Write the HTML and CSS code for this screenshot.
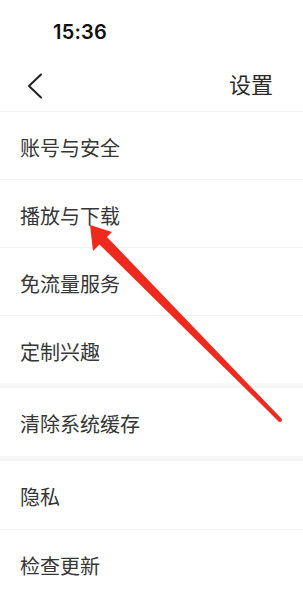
FILE: index.html
```html
<!DOCTYPE html>
<html lang="zh">
<head>
<meta charset="utf-8">
<link rel="stylesheet" href="styles.css">
</head>
<body>
<div class="page">
  <div class="status"><span class="time">15:36</span></div>
  <div class="nav">
    <svg class="back" width="20" height="30" viewBox="0 0 20 30"><path d="M15 1.5 L3 13 L15 24.5" fill="none" stroke="#222" stroke-width="2" stroke-linecap="round" stroke-linejoin="round"/></svg>
    <span class="title">设置</span>
  </div>
  <div class="group">
    <div class="row">账号与安全</div>
    <div class="row">播放与下载</div>
    <div class="row">免流量服务</div>
    <div class="row">定制兴趣</div>
  </div>
  <div class="band"></div>
  <div class="group">
    <div class="row tall">清除系统缓存</div>
  </div>
  <div class="band"></div>
  <div class="group">
    <div class="row tall">隐私</div>
    <div class="row">检查更新</div>
  </div>
  <svg class="arrow" width="303" height="600" viewBox="0 0 303 600">
    <polygon fill="#ee2a1e" points="90,225 93,251 112,232"/>
    <polygon fill="#ee2a1e" points="99,244 106,236 281.4,418.6 278.6,421.4"/>
    <circle cx="280" cy="420" r="2" fill="#ee2a1e"/>
  </svg>
</div>
</body>
</html>
```
FILE: styles.css
```css
html, body {
  margin: 0;
  padding: 0;
  background: #fff;
}
.page {
  position: relative;
  width: 303px;
  height: 600px;
  overflow: hidden;
  font-family: "Noto Sans CJK SC", "Noto Sans", sans-serif;
  color: #363636;
}
.status {
  height: 56px;
  display: flex;
  align-items: center;
  padding-left: 53px;
  box-sizing: border-box;
  padding-top: 8px;
}
.time {
  font-family: Inter, Roboto, sans-serif;
  font-weight: 600;
  font-size: 20px;
  color: #111;
  letter-spacing: 0.2px;
}
.nav {
  height: 55px;
  border-bottom: 1px solid #f2f2f2;
  display: flex;
  align-items: center;
  justify-content: space-between;
  padding: 0 30px 0 26px;
}
.back {
  display: block;
  margin-top: 8px;
}
.title {
  font-size: 22px;
  color: #2a2a2a;
  line-height: 1;
  margin-top: -2px;
}
.group {
  display: flex;
  flex-direction: column;
}
.row {
  height: 67px;
  display: flex;
  align-items: center;
  padding-left: 20px;
  padding-top: 3px;
  box-sizing: border-box;
  font-size: 20px;
  color: #363636;
}
.row + .row {
  border-top: 1px solid #f2f2f2;
  height: 68px;
}
.row.tall {
  height: 68px;
}
.band {
  height: 5px;
  background: linear-gradient(#f8f8f8, #f4f4f4);
}
.arrow {
  position: absolute;
  left: 0;
  top: 0;
  pointer-events: none;
}
```
